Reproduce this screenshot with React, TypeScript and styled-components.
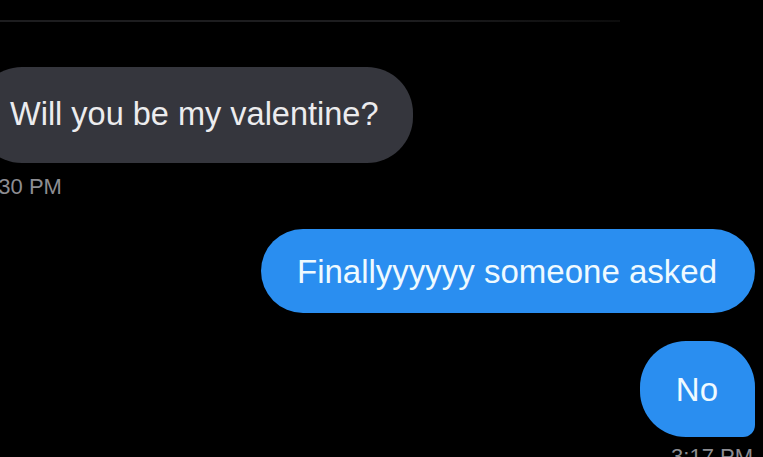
import React from "react";
import styled, { createGlobalStyle } from "styled-components";

const Global = createGlobalStyle`
  html, body { margin: 0; padding: 0; background: #000; overflow: hidden; }
  body { font-family: "Liberation Sans", Arial, sans-serif; }
`;

const Screen = styled.div`
  width: 763px;
  height: 457px;
  box-sizing: border-box;
  padding: 20px 8px 0 0;
  display: flex;
  flex-direction: column;
  overflow: hidden;
  background: #000;
  & > * { flex-shrink: 0; }
`;

const Rule = styled.div`
  height: 2px;
  width: 620px;
  background: linear-gradient(90deg, #1d1d1f 0%, #1d1d1f 66%, #0c0c0c 100%);
  margin-bottom: 45px;
`;

const Bubble = styled.div<{ $variant: "in" | "out" }>`
  display: flex;
  align-items: center;
  box-sizing: border-box;
  font-size: 33px;
  line-height: 1;
  white-space: nowrap;
  color: ${(p) => (p.$variant === "in" ? "#ececee" : "#effaff")};
  background: ${(p) => (p.$variant === "in" ? "#35363d" : "#2a8ef0")};
`;

const IncomingBubble = styled(Bubble)`
  align-self: flex-start;
  margin-left: -24px;
  height: 96px;
  padding: 0 34px 2px 34px;
  font-size: 32.5px;
  border-radius: 46px;
`;

const OutgoingBubble = styled(Bubble)<{ $tail?: boolean }>`
  align-self: flex-end;
  height: ${(p) => (p.$tail ? "96px" : "84px")};
  padding: ${(p) => (p.$tail ? "0 37px 0 36px" : "0 38px 0 36px")};
  border-radius: ${(p) => (p.$tail ? "46px 46px 12px 46px" : "42px")};
  margin-top: ${(p) => (p.$tail ? "28px" : "0")};
`;

const Stamp = styled.div<{ $side: "left" | "right" }>`
  font-size: 22px;
  line-height: 1;
  color: #8d8d92;
  white-space: nowrap;
  align-self: ${(p) => (p.$side === "left" ? "flex-start" : "flex-end")};
  margin-left: ${(p) => (p.$side === "left" ? "-20px" : "0")};
  margin-top: ${(p) => (p.$side === "left" ? "13px" : "9px")};
  margin-bottom: ${(p) => (p.$side === "left" ? "31px" : "0")};
  margin-right: ${(p) => (p.$side === "right" ? "2px" : "0")};
`;

export default function App() {
  return (
    <>
      <Global />
      <Screen>
        <Rule />
        <IncomingBubble $variant="in">Will you be my valentine?</IncomingBubble>
        <Stamp $side="left">3:30 PM</Stamp>
        <OutgoingBubble $variant="out">Finallyyyyyy someone asked</OutgoingBubble>
        <OutgoingBubble $variant="out" $tail>No</OutgoingBubble>
        <Stamp $side="right">3:17 PM</Stamp>
      </Screen>
    </>
  );
}
